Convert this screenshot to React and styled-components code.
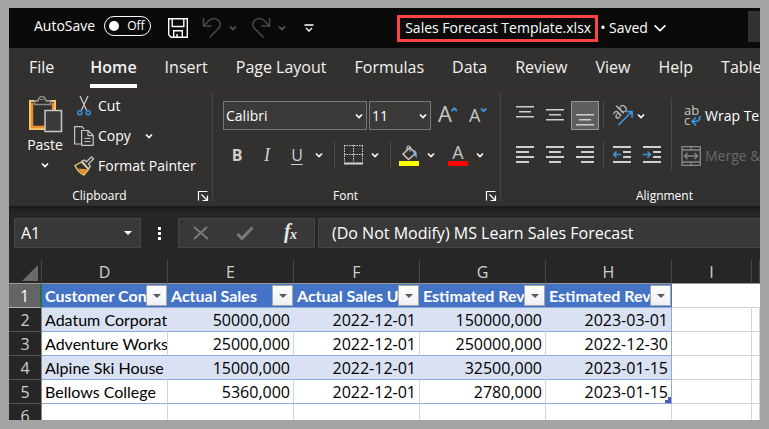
import React from 'react';
import styled, { createGlobalStyle } from 'styled-components';

const Global = createGlobalStyle`
  *, *::before, *::after { box-sizing: border-box; }
  body { margin: 0; background: #a4a4a4; }
  button, input, select { font: inherit; color: inherit; }
  svg { overflow: visible; }
`;

const ui = '"Open Sans", "Noto Sans", sans-serif';
const sheet = 'Lato, "Open Sans", sans-serif';

const Page = styled.div`
  height: 100vh;
  padding: 8px 9px 9px;
  display: flex;
`;

const Window = styled.main`
  flex: 1;
  min-width: 0;
  display: flex;
  flex-direction: column;
  overflow: hidden;
  background: #fff;
  color: #fff;
  font: 14px/20px ${ui};
  white-space: nowrap;
`;

/* Title bar */

const TitleBar = styled.header`
  display: flex;
  align-items: center;
  flex: none;
  height: 40px;
  padding-left: 25px;
  background: #0a0a0a;
`;

const AutoSave = styled.label`
  display: flex;
  align-items: center;
  gap: 9px;
  padding-bottom: 4px;
`;

const Switch = styled.button`
  display: flex;
  align-items: center;
  gap: 8px;
  width: 47px;
  height: 20px;
  padding: 0 4px;
  border: 1px solid #fff;
  border-radius: 10px;
  background: none;
  font-size: 12px;
  line-height: 18px;
  &::before {
    content: '';
    width: 10px;
    height: 10px;
    border-radius: 5px;
    background: #fff;
  }
`;

const QuickAccess = styled.div`
  display: flex;
  align-items: center;
  margin-left: 15px;
`;

const SplitButton = styled.div`
  display: flex;
  gap: 1px;
  padding-left: 8px;
`;

const PlainButton = styled.button`
  display: flex;
  align-items: center;
  justify-content: center;
  width: ${(p) => p.$width || 24}px;
  height: 28px;
  padding: 0;
  border: 0;
  background: none;
`;

const FileTitle = styled.h1`
  display: flex;
  align-items: center;
  gap: 2px;
  margin: 0 0 0 67px;
  font: inherit;
`;

const FileName = styled.span`
  padding: 0 4px 0 5px;
  height: 27px;
  border: 3px solid #ff4343;
`;

const SaveState = styled.button`
  display: flex;
  align-items: center;
  gap: 6px;
  padding: 0;
  border: 0;
  background: none;
`;

const SearchBox = styled.div`
  width: 12px;
  height: 31px;
  margin: 0 0 3px auto;
  background: #323232;
`;

/* Ribbon */

const Tabs = styled.nav`
  display: flex;
  flex: none;
  height: 41px;
  padding-left: 6px;
  border-bottom: 1px solid #382e2e;
  background: #323130;
`;

const Tab = styled.button`
  display: flex;
  flex: none;
  align-items: flex-start;
  padding: ${(p) => (p.$wide ? '7px 22px 0 14px' : '7px 14px 0')};
  border: 0;
  background: none;
  color: #f3f2f1;
  font-size: 16px;
  line-height: 24px;
  font-weight: ${(p) => (p.$active ? 600 : 400)};
  span {
    height: 29px;
    box-shadow: ${(p) => (p.$active ? '0 4px 0 #fff' : 'none')};
    margin-bottom: 4px;
  }
`;

const Ribbon = styled.section`
  display: flex;
  flex: none;
  height: 117px;
  padding-top: 2px;
  background: #323130;
`;

const Group = styled.div`
  display: flex;
  flex: none;
  flex-direction: column;
  justify-content: space-between;
  width: ${(p) => p.$width}px;
  margin-bottom: 5px;
  border-right: 1px solid #484644;
`;

const GroupFooter = styled.div`
  display: flex;
  align-items: center;
  height: 16px;
  margin-bottom: -3px;
  padding-right: 4px;
  font-size: 12px;
  line-height: 16px;
  text-align: center;
  span { flex: 1; }
`;

const Launcher = styled.button`
  display: flex;
  width: 18px;
  padding: 0 0 0 8px;
  border: 0;
  background: none;
`;

const ClipboardBody = styled.div`
  display: flex;
  gap: 10px;
  padding-left: 17px;
`;

const PasteButton = styled.button`
  display: flex;
  flex-direction: column;
  align-items: center;
  width: 38px;
  padding: 4px 0 0;
  border: 0;
  background: none;
  svg + span { margin-top: 2px; }
  span + svg { margin-top: 6px; }
`;

const CommandList = styled.div`
  display: flex;
  flex-direction: column;
`;

const Command = styled.button`
  display: flex;
  align-items: center;
  gap: 4px;
  height: 30px;
  padding: 0;
  border: 0;
  background: none;
  color: ${(p) => (p.disabled ? '#6a6866' : '#fff')};
  span + svg { margin-left: 10px; }
`;

const Stack = styled.div`
  display: flex;
  flex-direction: column;
  gap: 11px;
  padding: 10px 0 0 10px;
`;

const ToolRow = styled.div`
  display: flex;
  align-items: center;
  gap: ${(p) => p.$gap || 0}px;
  height: ${(p) => (p.$tall ? 29 : 28)}px;
`;

const Tool = styled.button`
  display: flex;
  flex: none;
  align-items: center;
  justify-content: center;
  width: 28px;
  height: 100%;
  margin-right: ${(p) => (p.$spaced ? 2 : 0)}px;
  padding: 0;
  border: 1px solid ${(p) => (p.$active ? '#979593' : 'transparent')};
  background: ${(p) => (p.$active ? '#605e5c' : 'none')};
`;

const Arrow = styled(PlainButton)`
  width: ${(p) => (p.$narrow ? 10 : 16)}px;
`;

const Letter = styled.span`
  color: #d0cfce;
  font: ${(p) => p.$font};
  text-decoration: ${(p) => (p.$under ? 'underline' : 'none')};
  text-underline-offset: 3px;
`;

const Split = styled.i`
  flex: none;
  width: 1px;
  height: 27px;
  margin: 0 4px 0 ${(p) => (p.$near ? 4 : 7)}px;
  background: #4e4c4a;
`;

const FontColor = styled.div`
  display: flex;
  height: 100%;
  margin-left: 5px;
`;

const Combo = styled.label`
  display: grid;
  align-items: center;
  flex: none;
  width: ${(p) => p.$width}px;
  height: 29px;
  border: 1px solid #7a7876;
  background: #3b3a39;
  select, svg { grid-area: 1 / 1; }
  select {
    appearance: none;
    width: 100%;
    height: 27px;
    padding: 0 2px;
    border: 0;
    background: none;
  }
  svg { justify-self: end; margin-right: 3px; pointer-events: none; }
`;

const AlignBody = styled.div`
  display: flex;
`;

const TallRule = styled.i`
  width: 1px;
  height: 73px;
  margin: 7px 0 0 5px;
  background: #484644;
`;

const WrapStack = styled(Stack)`
  gap: 10px;
  padding-left: 9px;
`;

/* Formula bar */

const FormulaBar = styled.section`
  display: flex;
  flex: none;
  height: 54px;
  padding: 12px 0 12px 5px;
  background: linear-gradient(#191919, #262626 7px);
  font-size: 16px;
`;

const Field = styled.div`
  display: flex;
  align-items: center;
  flex: ${(p) => (p.$width ? `0 0 ${p.$width}px` : '1')};
  min-width: 0;
  border: 1px solid #464646;
  border-right-width: ${(p) => (p.$width ? 1 : 0)}px;
  background: #383838;
  input {
    flex: 1;
    min-width: 0;
    padding: 0 0 0 ${(p) => (p.$width ? 6 : 13)}px;
    border: 0;
    background: none;
  }
`;

const Dots = styled.div`
  display: flex;
  flex-direction: column;
  align-items: center;
  justify-content: center;
  gap: 2px;
  width: 37px;
  i { width: 3px; height: 3px; background: #fff; }
`;

const FormulaButtons = styled(Field)`
  margin-right: 3px;
  padding-right: 2px;
  justify-content: space-around;
`;

/* Sheet */

const Sheet = styled.table`
  width: 100%;
  border-spacing: 0;
  table-layout: fixed;
  color: #000;
  font: 16px/22px ${ui};
`;

const Col = styled.col`
  width: ${(p) => (p.$width ? `${p.$width}px` : 'auto')};
`;

const ColHead = styled.th`
  height: 24px;
  padding: 0;
  border: solid #484848;
  border-width: 0 1px 0 0;
  border-bottom: 1px solid #9a9a9a;
  background: #262626;
  color: #d0d0d0;
  font-weight: 400;
`;

const Corner = styled(ColHead)`
  svg { display: block; margin: 2px 3px 0 auto; }
`;

const RowHead = styled.th`
  height: 24px;
  padding: 0;
  border-right: ${(p) => (p.$active ? '2px solid #217346' : '1px solid #8a8a8a')};
  border-bottom: 1px solid ${(p) => (p.$active ? '#b0b0b0' : '#555')};
  background: ${(p) => (p.$active ? '#646464' : '#262626')};
  color: ${(p) => (p.$active ? '#fff' : '#d0d0d0')};
  font-weight: 400;
`;

const HeaderCell = styled.th`
  height: 24px;
  padding: 0;
  border-bottom: 1px solid #8ea9db;
  background: #4472c4;
  color: #fff;
  font-family: ${sheet};
  font-weight: 700;
  text-align: left;
`;

const HeaderInner = styled.div`
  display: flex;
  height: 23px;
  padding: 1px 1px 1px 3px;
  span { flex: 1; overflow: hidden; }
`;

const Filter = styled.button`
  display: flex;
  align-items: center;
  justify-content: center;
  flex: none;
  width: 21px;
  height: 21px;
  padding: 0;
  border: 1px solid #a6a6a6;
  background: linear-gradient(#fff, #eef0f4);
`;

const Cell = styled.td`
  position: relative;
  height: 24px;
  padding: 0 3px;
  overflow: hidden;
  border-bottom: 1px solid #8ea9db;
  border-right: 1px solid ${(p) => (p.$last ? '#8ea9db' : p.$band ? '#d9e1f2' : '#d4d4d4')};
  background: ${(p) => (p.$band ? '#d9e1f2' : '#fff')};
  font-family: ${(p) => (p.$text ? sheet : ui)};
  text-align: ${(p) => (p.$text ? 'left' : 'right')};
`;

const Blank = styled.td`
  height: 24px;
  padding: 0;
  border-bottom: 1px solid #d4d4d4;
  border-right: 1px solid ${(p) => (p.$open ? 'transparent' : '#d4d4d4')};
`;

const ResizeMark = styled.svg`
  position: absolute;
  right: 0;
  bottom: 0;
`;

const Chevron = ({ color = '#fff', size = 8 }) => (
  <svg width={size} height={size} viewBox="0 0 8 8" fill="none" stroke={color} strokeWidth={size > 8 ? 1.1 : 1.6} aria-hidden="true">
    <path d={size > 8 ? 'M.4 2.2 4 5.8 7.6 2.2' : 'M1 2.5 4 5.5 7 2.5'} />
  </svg>
);

const SaveIcon = () => (
  <svg width="20" height="20" viewBox="0 0 20 20" fill="none" stroke="#fff" strokeWidth="1.4">
    <path d="M.7.7h18.6v18.6H3.2L.7 16.8zM4.2.7v7.8h11.6V.7M5.7 19.3v-6.6h8.6v6.6M9 16v3" />
  </svg>
);

const UndoIcon = ({ flip }) => (
  <svg width="20" height="22" viewBox="0 0 20 22" fill="none" stroke="#4a4a4a" strokeWidth="1.5">
    <path transform={flip ? 'translate(20 0) scale(-1 1)' : undefined} d="M1.5 1v8h8M2 8.5l5-5C9.5 1 13.5.7 16 3c2.800 2.500 2.800 6 .400 8.500L7.500 20.500" />
  </svg>
);

const CustomizeIcon = () => (
  <svg width="10" height="9" viewBox="0 0 10 9" fill="none" stroke="#fff" strokeWidth="1.3">
    <path d="M.5 1h9M2 4l3 3 3-3" />
  </svg>
);

const PasteIcon = () => (
  <svg width="36" height="38" viewBox="0 0 36 38" fill="none">
    <path d="M3 6h25v28H3z" stroke="#f7c86f" strokeWidth="2" />
    <path d="M5 8v24h13M26 8v8" stroke="#e8912d" strokeWidth="2.4" />
    <path d="M7.5 9.5V6H11c.6-2.8 2-4.5 4-4.5S18.4 3.2 19 6h4.5v3.5z" stroke="#8f8d8b" strokeWidth="1.6" fill="#323130" />
    <path d="M13 4.5h4" stroke="#8f8d8b" />
    <path d="M18 15.5h16.5v21H18z" stroke="#c8c6c4" strokeWidth="1.5" fill="#3b3a39" />
  </svg>
);

const CutIcon = () => (
  <svg width="20" height="20" viewBox="0 0 20 20" fill="none">
    <path d="M6 0l6.7 14.5M14 0 7.3 14.5" stroke="#c8c6c4" strokeWidth="1.3" />
    <circle cx="5.8" cy="16.7" r="2" stroke="#2f8fd8" strokeWidth="1.6" />
    <circle cx="14.2" cy="16.7" r="2" stroke="#2f8fd8" strokeWidth="1.6" />
  </svg>
);

const CopyIcon = () => (
  <svg width="20" height="20" viewBox="0 0 20 20" fill="none" stroke="#c8c6c4" strokeWidth="1.2">
    <path d="M7.6 18H.6V.6h7.2L10 3M7.6 4.5h6.6l5 5v9.9H7.6z" />
    <path d="M14 4.7v5h5M10.5 12.5h6M10.5 15.5h6" />
  </svg>
);

const PainterIcon = () => (
  <svg width="20" height="20" viewBox="0 0 20 20" fill="none">
    <path d="M1 9.5 7.5 6l7 7.5-4.5 5.5C6 17.5 3 14 1 9.500z" stroke="#f7c86f" strokeWidth="1.4" />
    <path d="m4 12.5 10.2 1L10 18.5C7.5 17 5.5 15 4 12.500z" fill="#e8912d" />
    <path d="m8 5 2.5-1 2 1.8L17.5.8l2 2L14.5 8l1.7 2.2L14.5 13z" fill="#323130" stroke="#c8c6c4" strokeWidth="1.3" />
  </svg>
);

const LauncherIcon = () => (
  <svg width="10" height="10" viewBox="0 0 10 10" fill="none" stroke="#fff">
    <path d="M.5 9.5v-9h9M3.5 3.5 9 9M9.5 4.5v5h-5" strokeWidth="1.2" />
  </svg>
);

const BorderIcon = () => (
  <svg width="19" height="20" viewBox="0 0 19 20" fill="none" stroke="#d6d5d4">
    <path strokeDasharray="1.5 1" d="M.5.5v16M18.5.5v16M9.5.5v16M0 .5h19M0 9.5h19" />
    <path strokeWidth="2" d="M0 18.5h19" />
  </svg>
);

const FillIcon = () => (
  <svg width="20" height="21" viewBox="0 0 20 21" fill="none">
    <path d="M4 9 11 2.5l5.5 6L9.500 14.500z" stroke="#c8c6c4" strokeWidth="1.5" />
    <path d="M8 5.5V2.5C8 .5 11 .5 11 2.5v4" stroke="#c8c6c4" strokeWidth="1.2" />
    <path d="M14.5 5c2.5.3 3.5 2 3.2 8-2-1-1.2-4-3.2-5z" fill="#7fb2e6" />
    <path d="M0 16h20v5H0z" fill="#ff0" />
  </svg>
);

const FontColorIcon = () => (
  <svg width="20" height="21" viewBox="0 0 20 21">
    <text x="10" y="14" textAnchor="middle" fontFamily="Open Sans, sans-serif" fontSize="18" fill="#c8c6c4">A</text>
    <path d="M0 16h20v5H0z" fill="#f00" />
  </svg>
);

const SizeIcon = ({ down }) => (
  <svg width="20" height="20" viewBox="0 0 20 20" fill="none">
    <text x={down ? 2 : 1} y="16" fontFamily="Open Sans, sans-serif" fontSize={down ? 18 : 22} fill="#c8c6c4">A</text>
    <path d={down ? 'm14 2.5 2.7 2.7 2.7-2.7' : 'm14.500 5 2.700-2.700 2.700 2.700'} stroke="#3a96dd" strokeWidth="1.8" />
  </svg>
);

const Lines = ({ rows, height = 18 }) => (
  <svg width="18" height={height} viewBox={`0 0 18 ${height}`} fill="#d0cfce">
    {rows.map(([x, y, w]) => <rect key={y} x={x} y={y} width={w} height={height === 18 ? 2 : 1.5} />)}
  </svg>
);

const vertical = (y) => [[0, y, 18], [3, y + 5, 12], [0, y + 10, 18]];

const IndentIcon = ({ right }) => (
  <svg width="18" height="18" viewBox="0 0 18 18" fill="none">
    <path d="M0 1h18M10 6h8M10 11h8M0 16h18" stroke="#d0cfce" strokeWidth="2" />
    <path d={right ? 'M0 8.5h7M4.5 5.5l3 3-3 3' : 'M8 8.5H1M3.5 5.5l-2.8 3 2.8 3'} stroke="#3a96dd" strokeWidth="1.6" />
  </svg>
);

const OrientationIcon = () => (
  <svg width="22" height="22" viewBox="0 0 22 22" fill="none">
    <text transform="translate(6 15) rotate(-45)" fontFamily="Open Sans, sans-serif" fontSize="14" fill="#c8c6c4">ab</text>
    <path d="M7.5 20 20.5 7M15 6.7h6v6" stroke="#3a96dd" strokeWidth="1.7" />
  </svg>
);

const WrapIcon = () => (
  <svg width="20" height="22" viewBox="0 0 20 22" fill="none">
    <text x="3" y="10" fontFamily="Open Sans, sans-serif" fontSize="13" fill="#c8c6c4">
      <tspan>ab</tspan>
      <tspan x="3" y="20">c</tspan>
    </text>
    <path d="M18.5 11c1 4-1 6-7 5.5M15 12.5l-4 4 4 4" stroke="#3a96dd" strokeWidth="1.7" />
  </svg>
);

const MergeIcon = () => (
  <svg width="20" height="20" viewBox="0 0 20 20" fill="none" stroke="#8a8886" strokeWidth="1.3">
    <path d="M1 .7h18.3v18.6H1zM1 4h18.3M1 16h18.3M10 .7V4M10 16v3.3M3.500 10h13M6.500 7l-3 3 3 3M13.500 7l3 3-3 3" />
  </svg>
);

const FormulaIcon = () => (
  <svg width="20" height="20" viewBox="0 0 20 20" fill="#e6e6e6">
    <text x="4" y="15" fontFamily="Liberation Serif, serif" fontStyle="italic" fontWeight="700" fontSize="20">f</text>
    <text x="10" y="16" fontFamily="Liberation Serif, serif" fontStyle="italic" fontWeight="700" fontSize="14">x</text>
  </svg>
);

const CancelIcon = () => (
  <svg width="16" height="14" viewBox="0 0 16 14" stroke="#7a7a7a" strokeWidth="2">
    <path d="m1 1 14 12M14 1 1 13" />
  </svg>
);

const CheckIcon = () => (
  <svg width="18" height="15" viewBox="0 0 18 15" fill="none" stroke="#7a7a7a" strokeWidth="3">
    <path d="m1.5 8 4.5 4.5L16.5 1.5" />
  </svg>
);

const Triangle = ({ color = '#fff' }) => (
  <svg width="8" height="4" viewBox="0 0 8 4" fill={color} aria-hidden="true"><path d="M0 0h8L4 4z" /></svg>
);

const tabs = ['File', 'Home', 'Insert', 'Page Layout', 'Formulas', 'Data', 'Review', 'View', 'Help', 'Table Design'];
const headers = ['Customer Contact', 'Actual Sales', 'Actual Sales Units', 'Estimated Revenue', 'Estimated Revenue Date'];
const rows = [
  ['Adatum Corporation', '50000,000', '2022-12-01', '150000,000', '2023-03-01'],
  ['Adventure Works', '25000,000', '2022-12-01', '250000,000', '2022-12-30'],
  ['Alpine Ski House', '15000,000', '2022-12-01', '32500,000', '2023-01-15'],
  ['Bellows College', '5360,000', '2022-12-01', '2780,000', '2023-01-15'],
];

const Footer = ({ title }) => (
  <GroupFooter>
    <span>{title}</span>
    <Launcher aria-label={`${title} settings`}><LauncherIcon /></Launcher>
  </GroupFooter>
);

export default function App() {
  return (
    <Page>
      <Global />
      <Window>
        <TitleBar>
          <AutoSave htmlFor="autosave">
            AutoSave
            <Switch id="autosave" role="switch" aria-checked="false">Off</Switch>
          </AutoSave>
          <QuickAccess>
            <PlainButton aria-label="Save"><SaveIcon /></PlainButton>
            <SplitButton>
              <PlainButton $width={28} aria-label="Undo"><UndoIcon /></PlainButton>
              <PlainButton $width={12} aria-label="Undo history"><Chevron color="#5a5a5a" /></PlainButton>
            </SplitButton>
            <SplitButton>
              <PlainButton $width={28} aria-label="Redo"><UndoIcon flip /></PlainButton>
              <PlainButton $width={12} aria-label="Redo history"><Chevron color="#5a5a5a" /></PlainButton>
            </SplitButton>
            <PlainButton $width={42} aria-label="Customize toolbar"><CustomizeIcon /></PlainButton>
          </QuickAccess>
          <FileTitle>
            <FileName>Sales Forecast Template.xlsx</FileName>
            <SaveState>• Saved <Chevron size={12} /></SaveState>
          </FileTitle>
          <SearchBox />
        </TitleBar>

        <Tabs>
          {tabs.map((t) => (
            <Tab key={t} $wide={t === 'File'} $active={t === 'Home'}><span>{t}</span></Tab>
          ))}
        </Tabs>

        <Ribbon>
          <Group $width={204}>
            <ClipboardBody>
              <PasteButton><PasteIcon /><span>Paste</span><Chevron /></PasteButton>
              <CommandList>
                <Command><CutIcon /><span>Cut</span></Command>
                <Command><CopyIcon /><span>Copy</span><Chevron /></Command>
                <Command><PainterIcon /><span>Format Painter</span></Command>
              </CommandList>
            </ClipboardBody>
            <Footer title="Clipboard" />
          </Group>

          <Group $width={288}>
            <Stack>
              <ToolRow $tall $gap={2}>
                <Combo $width={144}>
                  <select aria-label="Font" defaultValue="Calibri"><option>Calibri</option></select>
                  <Chevron />
                </Combo>
                <Combo $width={62}>
                  <select aria-label="Font size" defaultValue="11"><option>11</option></select>
                  <Chevron />
                </Combo>
                <Tool aria-label="Increase font size"><SizeIcon /></Tool>
                <Tool aria-label="Decrease font size"><SizeIcon down /></Tool>
              </ToolRow>
              <ToolRow>
                <Tool $spaced aria-label="Bold"><Letter $font={`700 16px/20px ${ui}`}>B</Letter></Tool>
                <Tool $spaced aria-label="Italic"><Letter $font='italic 18px/20px "Liberation Serif", serif'>I</Letter></Tool>
                <Tool aria-label="Underline"><Letter $under $font={`16px/20px ${ui}`}>U</Letter></Tool>
                <Arrow aria-label="Underline styles"><Chevron /></Arrow>
                <Split />
                <Tool aria-label="Borders"><BorderIcon /></Tool>
                <Arrow aria-label="Border styles"><Chevron /></Arrow>
                <Split />
                <Tool aria-label="Fill color"><FillIcon /></Tool>
                <Arrow aria-label="Fill colors"><Chevron /></Arrow>
                <FontColor>
                  <Tool aria-label="Font color"><FontColorIcon /></Tool>
                  <Arrow aria-label="Font colors"><Chevron /></Arrow>
                </FontColor>
              </ToolRow>
            </Stack>
            <Footer title="Font" />
          </Group>

          <Group $width={350}>
            <AlignBody>
              <Stack>
                <ToolRow $tall>
                  <Tool $spaced aria-label="Top align"><Lines height={22} rows={vertical(1)} /></Tool>
                  <Tool $spaced aria-label="Middle align"><Lines height={22} rows={vertical(4)} /></Tool>
                  <Tool $active aria-label="Bottom align"><Lines height={22} rows={vertical(9)} /></Tool>
                  <Split $near />
                  <Tool aria-label="Orientation"><OrientationIcon /></Tool>
                  <Arrow $narrow aria-label="Orientation options"><Chevron /></Arrow>
                </ToolRow>
                <ToolRow>
                  <Tool $spaced aria-label="Align left"><Lines rows={[[0, 0, 18], [0, 5, 13], [0, 10, 18], [0, 15, 13]]} /></Tool>
                  <Tool $spaced aria-label="Center"><Lines rows={[[0, 0, 18], [3, 5, 12], [0, 10, 18], [3, 15, 12]]} /></Tool>
                  <Tool aria-label="Align right"><Lines rows={[[0, 0, 18], [5, 5, 13], [0, 10, 18], [5, 15, 13]]} /></Tool>
                  <Split $near />
                  <Tool $spaced aria-label="Decrease indent"><IndentIcon /></Tool>
                  <Tool aria-label="Increase indent"><IndentIcon right /></Tool>
                </ToolRow>
              </Stack>
              <TallRule />
              <WrapStack>
                <Command><WrapIcon /><span>Wrap Text</span></Command>
                <Command disabled><MergeIcon /><span>Merge &amp; Center</span></Command>
              </WrapStack>
            </AlignBody>
            <Footer title="Alignment" />
          </Group>
        </Ribbon>

        <FormulaBar>
          <Field $width={127}>
            <input aria-label="Name box" defaultValue="A1" />
            <PlainButton aria-label="Named cells"><Triangle /></PlainButton>
          </Field>
          <Dots><i /><i /><i /></Dots>
          <FormulaButtons $width={137}>
            <PlainButton aria-label="Cancel"><CancelIcon /></PlainButton>
            <PlainButton aria-label="Enter"><CheckIcon /></PlainButton>
            <PlainButton aria-label="Insert function"><FormulaIcon /></PlainButton>
          </FormulaButtons>
          <Field>
            <input aria-label="Formula" defaultValue="(Do Not Modify) MS Learn Sales Forecast" />
          </Field>
        </FormulaBar>

        <Sheet>
          <colgroup>
            <Col $width={33} />
            {headers.map((h) => <Col key={h} $width={126} />)}
            <Col $width={80} />
            <Col />
          </colgroup>
          <thead>
            <tr>
              <Corner aria-label="Select all">
                <svg width="16" height="16" viewBox="0 0 16 16" fill="#6a6a6a"><path d="M16 0v16H0z" /></svg>
              </Corner>
              {['D', 'E', 'F', 'G', 'H', 'I', ''].map((c) => <ColHead key={c} scope="col">{c}</ColHead>)}
            </tr>
          </thead>
          <tbody>
            <tr>
              <RowHead scope="row" $active>1</RowHead>
              {headers.map((h) => (
                <HeaderCell key={h} scope="col">
                  <HeaderInner>
                    <span>{h}</span>
                    <Filter aria-label={`Filter ${h}`}><Triangle color="#5a5a5a" /></Filter>
                  </HeaderInner>
                </HeaderCell>
              ))}
              <Blank $open />
              <Blank $open />
            </tr>
            {rows.map((row, r) => (
              <tr key={row[0]}>
                <RowHead scope="row">{r + 2}</RowHead>
                {row.map((v, c) => (
                  <Cell key={c} $text={c === 0} $band={r % 2 === 0} $last={c === 4}>
                    {v}
                    {r === 3 && c === 4 && (
                      <ResizeMark width="6" height="6" viewBox="0 0 6 6" fill="#4a5bb5"><path d="M3 0h3v6H0V3h3z" /></ResizeMark>
                    )}
                  </Cell>
                ))}
                <Blank />
                <Blank />
              </tr>
            ))}
            <tr>
              <RowHead scope="row">6</RowHead>
              {[0, 1, 2, 3, 4, 5, 6].map((c) => <Blank key={c} />)}
            </tr>
          </tbody>
        </Sheet>
      </Window>
    </Page>
  );
}
